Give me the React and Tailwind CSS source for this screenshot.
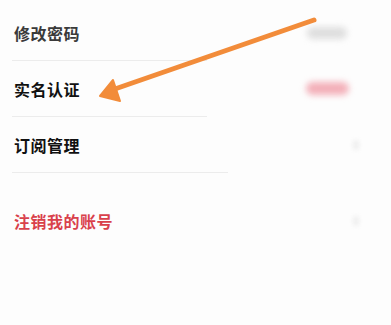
export default function App() {
  const rows = [
    { label: "修改密码", tone: "text-[#3a3a3a]", right: "gray", line: "w-[195px]" },
    { label: "实名认证", tone: "text-[#111]", right: "pink", line: "w-[195px]" },
    { label: "订阅管理", tone: "text-[#111]", right: "chev", line: "w-[216px]" },
  ];

  return (
    <div
      className="relative w-[391px] h-[325px] overflow-hidden bg-[#fdfdfd]"
      style={{ fontFamily: '"Noto Sans CJK SC", "Noto Sans", sans-serif' }}
    >
      <div className="pt-[5px]">
        {rows.map((r) => (
          <div key={r.label}>
            <div className="flex items-center justify-between h-[55px] pl-[14px] pr-[30px]">
              <span className={`text-[16px] font-bold tracking-[0.5px] ${r.tone}`}>{r.label}</span>
              {r.right === "gray" && (
                <div className="mr-[14px] w-[40px] h-[12px] rounded-full bg-[#dedede] blur-[3px]" />
              )}
              {r.right === "pink" && (
                <div className="mr-[12px] w-[43px] h-[13px] rounded-full bg-[#f3b0b9] blur-[3px]" />
              )}
              {r.right === "chev" && (
                <div className="w-[6px] h-[10px] mr-[2px] rounded-sm bg-[#eeeeee] blur-[2px]" />
              )}
            </div>
            <div className={`ml-[12px] h-px bg-[#ececec] ${r.line}`} />
          </div>
        ))}

        <div className="mt-[20px] flex items-center justify-between h-[56px] pl-[14px] pr-[30px]">
          <span className="text-[16px] font-bold tracking-[0.5px] text-[#d9414b]">注销我的账号</span>
          <div className="w-[6px] h-[10px] mr-[2px] rounded-sm bg-[#eeeeee] blur-[2px]" />
        </div>
      </div>

      <svg className="absolute left-0 top-0 pointer-events-none" width="391" height="325" viewBox="0 0 391 325">
        <line x1="314" y1="20" x2="112" y2="90" stroke="#f28c3a" strokeWidth="5" strokeLinecap="round" />
        <polygon points="100,96 113,80 120,101" fill="#f28c3a" stroke="#f28c3a" strokeWidth="2" strokeLinejoin="round" />
      </svg>
    </div>
  );
}
